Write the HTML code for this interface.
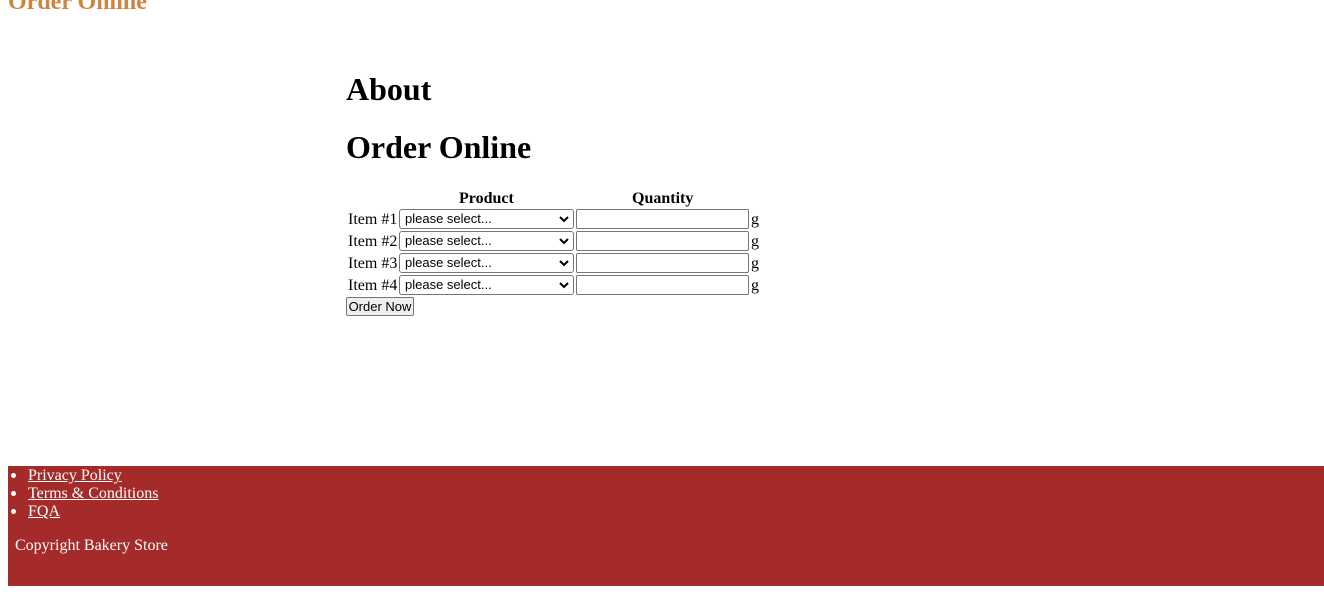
<!DOCTYPE html>
<html><head><style>
body{margin:0;width:1324px;height:601px;position:relative;font-family:"Liberation Serif",serif;font-size:16px;background:#fff;overflow:hidden}
.a{position:absolute;white-space:nowrap}
h1{margin:0;font-size:32px;font-weight:bold}
.sel{position:absolute;left:399px;width:175px;height:20px;box-sizing:border-box;border:1px solid #767676;border-radius:3px;font:13px "Liberation Sans",sans-serif;padding:1px 5px;background:#fff}
.sel svg{position:absolute;right:4px;top:6px}
.inp{position:absolute;left:576px;width:173px;height:20px;box-sizing:border-box;border:1px solid #767676;border-radius:2px;background:#fff}
footer{position:absolute;left:8px;top:466px;width:1316px;height:120px;background:#a52a2a;color:#fff}
footer a{color:#fff}
.b{position:absolute;left:3px;width:5px;height:5px;border-radius:50%;background:#fff}
</style></head><body>
<div class="a" style="left:8px;top:-11px;font-size:24px;font-weight:bold;color:#cd853f">Order Online</div>
<h1 class="a" style="left:346px;top:71px">About</h1>
<h1 class="a" style="left:346px;top:129px">Order Online</h1>
<div class="a" style="left:459px;top:190px;font-weight:bold;font-size:16px">Product</div>
<div class="a" style="left:632px;top:190px;font-weight:bold;font-size:16px">Quantity</div>

<div class="a" style="left:348px;top:211px">Item #1</div>
<div class="sel" style="top:209px">please select...<svg width="10" height="7" viewBox="0 0 10 7"><path d="M1 1l4 4 4-4" stroke="#000" stroke-width="2" fill="none"/></svg></div>
<div class="inp" style="top:209px"></div><div class="a" style="left:751px;top:211px">g</div>

<div class="a" style="left:348px;top:233px">Item #2</div>
<div class="sel" style="top:231px">please select...<svg width="10" height="7" viewBox="0 0 10 7"><path d="M1 1l4 4 4-4" stroke="#000" stroke-width="2" fill="none"/></svg></div>
<div class="inp" style="top:231px"></div><div class="a" style="left:751px;top:233px">g</div>

<div class="a" style="left:348px;top:255px">Item #3</div>
<div class="sel" style="top:253px">please select...<svg width="10" height="7" viewBox="0 0 10 7"><path d="M1 1l4 4 4-4" stroke="#000" stroke-width="2" fill="none"/></svg></div>
<div class="inp" style="top:253px"></div><div class="a" style="left:751px;top:255px">g</div>

<div class="a" style="left:348px;top:277px">Item #4</div>
<div class="sel" style="top:275px">please select...<svg width="10" height="7" viewBox="0 0 10 7"><path d="M1 1l4 4 4-4" stroke="#000" stroke-width="2" fill="none"/></svg></div>
<div class="inp" style="top:275px"></div><div class="a" style="left:751px;top:277px">g</div>

<div class="a" style="left:346px;top:297px;width:66px;height:17px;border:1px solid #767676;border-radius:2px;background:#efefef;font:13px 'Liberation Sans',sans-serif;line-height:17px;text-align:center">Order Now</div>

<footer>
<div class="b" style="top:7px"></div><div class="a" style="left:20px;top:1px"><a href="#">Privacy Policy</a></div>
<div class="b" style="top:25px"></div><div class="a" style="left:20px;top:19px"><a href="#">Terms &amp; Conditions</a></div>
<div class="b" style="top:43px"></div><div class="a" style="left:20px;top:37px"><a href="#">FQA</a></div>
<div class="a" style="left:7px;top:71px">Copyright Bakery Store</div>
</footer>
</body></html>
